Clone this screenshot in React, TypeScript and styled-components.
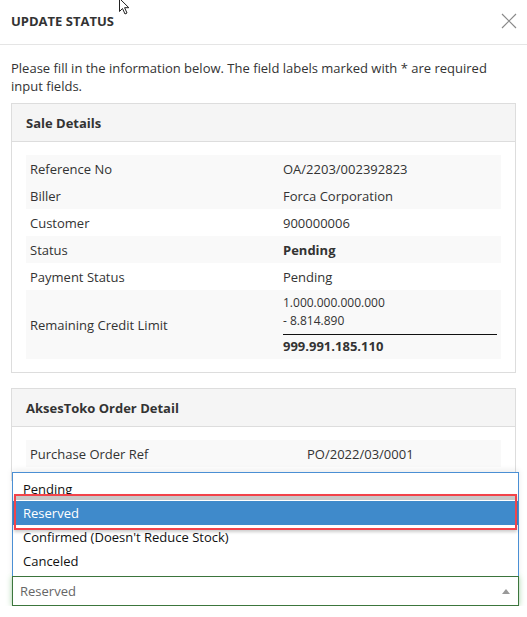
import React from "react";
import styled, { createGlobalStyle } from "styled-components";

const GlobalStyle = createGlobalStyle`
  html, body {
    margin: 0;
    padding: 0;
    background: #ffffff;
  }
  body {
    font-family: "Open Sans", Lato, "Liberation Sans", sans-serif;
    font-size: 13px;
    color: #333333;
  }
  * { box-sizing: border-box; }
`;

const Modal = styled.div`
  position: relative;
  width: 527px;
  background: #ffffff;
`;

const Header = styled.div`
  height: 45px;
  padding: 0 11px;
  display: flex;
  align-items: center;
  justify-content: space-between;
  border-bottom: 1px solid #e5e5e5;
  padding-bottom: 3px;
`;

const Title = styled.h4`
  margin: 0;
  font-size: 13px;
  font-weight: 700;
  text-transform: uppercase;
  color: #333;
`;

const CloseButton = styled.button`
  border: 0;
  background: transparent;
  padding: 0;
  width: 16px;
  height: 16px;
  display: flex;
  align-items: center;
  justify-content: center;
  margin-right: -1px;
`;

const Cursor = styled.svg`
  position: absolute;
  left: 118px;
  top: -2px;
`;

const Body = styled.div`
  padding: 14px 11px 0 11px;
`;

const Intro = styled.p`
  margin: 0;
  line-height: 18px;
  max-width: 480px;
`;

const Panel = styled.div<{ $top: number }>`
  margin-top: ${(p) => p.$top}px;
  border: 1px solid #dddddd;
  background: #ffffff;
`;

const PanelHeading = styled.div`
  height: 38px;
  padding: 0 14px;
  display: flex;
  align-items: center;
  background: #f5f5f5;
  border-bottom: 1px solid #dddddd;
  font-weight: 700;
`;

const PanelBody = styled.div`
  padding: 13px 14px 13px 14px;
`;

const Row = styled.div<{ $striped?: boolean; $labelWidth: number }>`
  display: grid;
  grid-template-columns: ${(p) => p.$labelWidth}px 1fr;
  align-items: center;
  min-height: 27px;
  background: ${(p) => (p.$striped ? "#f9f9f9" : "#ffffff")};
`;

const Cell = styled.div<{ $bold?: boolean }>`
  padding: 0 4px;
  line-height: 18px;
  font-weight: ${(p) => (p.$bold ? 700 : 400)};
`;

const CreditCell = styled.div`
  padding: 4px 4px;
  display: flex;
  flex-direction: column;
`;

const CreditLine = styled.div<{ $bold?: boolean }>`
  line-height: 18px;
  font-size: ${(p) => (p.$bold ? 13 : 12)}px;
  font-weight: ${(p) => (p.$bold ? 700 : 400)};
`;

const Rule = styled.div`
  height: 1px;
  background: #111;
  margin: 4px 0 2px 0;
`;

const Field = styled.div`
  position: relative;
  margin-top: 95px;
  margin-left: 1px;
  width: 507px;
`;

const SelectBox = styled.div`
  height: 30px;
  border: 1px solid #3c763d;
  box-shadow: 0 1px 1px rgba(0, 0, 0, 0.08), 0 0 6px #a7d2a8;
  display: flex;
  align-items: center;
  justify-content: space-between;
  padding: 0 8px 0 7px;
  color: #666;
  background: #fff;
`;

const Arrow = styled.span`
  width: 0;
  height: 0;
  border-left: 4px solid transparent;
  border-right: 4px solid transparent;
  border-bottom: 5px solid #999;
`;

const DropList = styled.ul`
  position: absolute;
  left: 0;
  right: 0;
  bottom: 30px;
  margin: 0;
  padding: 4px 0 4px 0;
  list-style: none;
  background: #fff;
  border: 1px solid #4a8fd4;
  border-bottom: 0;
  height: 104px;
  box-shadow: 0 -2px 6px rgba(0, 0, 0, 0.08);
`;

const Option = styled.li<{ $active?: boolean }>`
  position: relative;
  height: 24px;
  line-height: 24px;
  padding: 0 10px;
  color: ${(p) => (p.$active ? "#ffffff" : "#111")};
  background: ${(p) => (p.$active ? "#3f8acb" : "transparent")};

  ${(p) =>
    p.$active &&
    `
    &::after {
      content: "";
      position: absolute;
      left: 1px;
      right: 1px;
      top: -7px;
      bottom: -5px;
      border: 2px solid #f2434a;
      box-shadow: inset 0 4px 0 #c8c8c8, inset 0 -1px 0 #ffffff, 0 2px 3px rgba(0,0,0,0.2);
      pointer-events: none;
    }
  `}
`;

const saleRows = [
  { label: "Reference No", value: "OA/2203/002392823", striped: true },
  { label: "Biller", value: "Forca Corporation", striped: true },
  { label: "Customer", value: "900000006", striped: false },
  { label: "Status", value: "Pending", striped: true, bold: true },
  { label: "Payment Status", value: "Pending", striped: false },
];

export default function App() {
  return (
    <>
      <GlobalStyle />
      <Modal>
        <Cursor width="14" height="18" viewBox="0 0 14 18">
          <path
            d="M1.5 0.5 L1.5 13.5 L4.5 10.5 L7 16 L9 15 L6.6 9.7 L10.8 9.7 Z"
            fill="#fff"
            stroke="#222"
            strokeWidth="1"
            strokeLinejoin="round"
          />
        </Cursor>
        <Header>
          <Title>Update Status</Title>
          <CloseButton aria-label="Close">
            <svg width="16" height="16" viewBox="0 0 16 16">
              <path d="M1 1 L15 15 M15 1 L1 15" stroke="#8a8a8a" strokeWidth="1.2" />
            </svg>
          </CloseButton>
        </Header>
        <Body>
          <Intro>
            Please fill in the information below. The field labels marked with * are required
            input fields.
          </Intro>

          <Panel $top={8}>
            <PanelHeading>Sale Details</PanelHeading>
            <PanelBody>
              {saleRows.map((r) => (
                <Row key={r.label} $striped={r.striped} $labelWidth={253}>
                  <Cell>{r.label}</Cell>
                  <Cell $bold={r.bold}>{r.value}</Cell>
                </Row>
              ))}
              <Row $striped $labelWidth={253}>
                <Cell>Remaining Credit Limit</Cell>
                <CreditCell>
                  <CreditLine>1.000.000.000.000</CreditLine>
                  <CreditLine>- 8.814.890</CreditLine>
                  <Rule />
                  <CreditLine $bold>999.991.185.110</CreditLine>
                </CreditCell>
              </Row>
            </PanelBody>
          </Panel>

          <Panel $top={15}>
            <PanelHeading>AksesToko Order Detail</PanelHeading>
            <PanelBody>
              <Row $striped $labelWidth={277}>
                <Cell>Purchase Order Ref</Cell>
                <Cell>PO/2022/03/0001</Cell>
              </Row>
            </PanelBody>
          </Panel>

          <Field>
            <SelectBox>
              <span>Reserved</span>
              <Arrow />
            </SelectBox>
            <DropList>
              <Option>Pending</Option>
              <Option $active>Reserved</Option>
              <Option>Confirmed (Doesn't Reduce Stock)</Option>
              <Option>Canceled</Option>
            </DropList>
          </Field>
        </Body>
      </Modal>
    </>
  );
}
